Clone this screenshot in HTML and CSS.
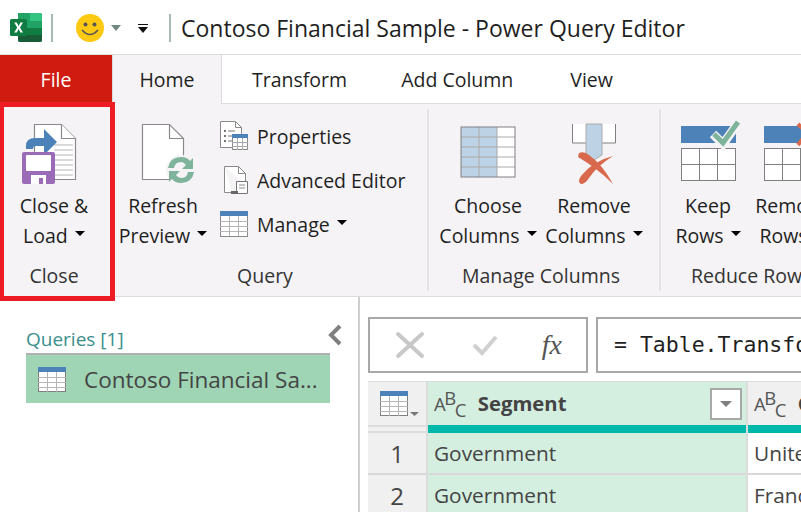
FILE: index.html
```html
<!DOCTYPE html>
<html lang="en">
<head>
    <meta charset="UTF-8">
    <title>Contoso Financial Sample - Power Query Editor</title>
    <link rel="stylesheet" href="styles.css">
</head>
<body>
<div class="app">
    <!-- Title bar -->
    <header class="titlebar">
        <svg class="icon-excel" width="32" height="29" viewBox="0 0 32 29">
            <path d="M8 0h22a2 2 0 0 1 2 2v25a2 2 0 0 1-2 2H10a2 2 0 0 1-2-2z" fill="#21a366"/>
            <path d="M20 0h10a2 2 0 0 1 2 2v6H20z" fill="#33c481"/>
            <rect x="8" y="8" width="12" height="7" fill="#21a366"/>
            <rect x="20" y="8" width="12" height="7" fill="#21a366"/>
            <rect x="8" y="15" width="12" height="7" fill="#107c41"/>
            <rect x="20" y="15" width="12" height="7" fill="#107c41"/>
            <path d="M8 22h24v5a2 2 0 0 1-2 2H10a2 2 0 0 1-2-2z" fill="#185c37"/>
            <rect x="0" y="6" width="17" height="17" rx="1.5" fill="#107c41"/>
            <path d="M4.2 9.5h2.5l1.9 3.4 1.9-3.4H13l-3 5 3 5h-2.5l-1.9-3.4-1.9 3.4H4.2l3-5z" fill="#fff"/>
        </svg>
        <span class="titlebar-sep"></span>
        <svg class="icon-smiley" width="28" height="28" viewBox="0 0 28 28">
            <circle cx="14" cy="14" r="14" fill="#fdc913"/>
            <circle cx="9.5" cy="10.5" r="2" fill="#555"/>
            <circle cx="18.5" cy="10.5" r="2" fill="#555"/>
            <path d="M6 16q8 9 16 0" fill="none" stroke="#555" stroke-width="1.6"/>
        </svg>
        <span class="qat-caret"></span>
        <span class="qat-more"></span>
        <span class="titlebar-sep second"></span>
        <span class="window-title">Contoso Financial Sample - Power Query Editor</span>
    </header>

    <!-- Tabs -->
    <nav class="tabs">
        <div class="tab file">File</div>
        <div class="tab active">Home</div>
        <div class="tab transform">Transform</div>
        <div class="tab addcol">Add Column</div>
        <div class="tab view">View</div>
    </nav>

    <!-- Ribbon -->
    <section class="ribbon">
        <div class="group close-group">
            <div class="group-body">
                <div class="big-btn w-close">
                    <svg class="nudge-left" width="60" height="62" viewBox="0 0 60 62">
                        <path d="M14.5 1.5h27l14 14v41h-41z" fill="#fff" stroke="#8a8a8a" stroke-width="1.2"/>
                        <path d="M41.500 1.500v14h14" fill="#fff" stroke="#8a8a8a" stroke-width="1.2"/>
                        <path d="M34 22h19M34 27h19M34 32h19M34 37h19M34 42h19M34 47h19M34 52h19" stroke="#b5b5b5" stroke-width="1.2"/>
                        <path d="M6 26v-3q0-8 9-8h9V6l13 13-13 13v-9h-8q-3 0-3 3z" fill="#4d82b8"/>
                        <rect x="2" y="29" width="33" height="32" rx="2" fill="#9a6cb8"/>
                        <rect x="6" y="32" width="25" height="16" rx="1" fill="#fff"/>
                        <path d="M11 61v-9h15v9h-3v-6h-4v6z" fill="#fff"/>
                    </svg>
                    <div class="big-label">Close &amp;<br>Load <span class="caret"></span></div>
                </div>
            </div>
            <div class="group-label">Close</div>
        </div>

        <div class="group query-group">
            <div class="group-body">
                <div class="big-btn w-refresh">
                    <svg width="60" height="62" viewBox="0 0 60 62">
                        <path d="M9.500 1.500h27l14 14v41h-41z" fill="#fff" stroke="#8a8a8a" stroke-width="1.2"/>
                        <path d="M36.500 1.500v14h14" fill="none" stroke="#8a8a8a" stroke-width="1.200"/>
                        <circle cx="48" cy="47" r="15" fill="#f5f3f5"/>
                        <path d="M35 45q2-11 13-11 6 0 9 4l3-3v11H49l4-4q-2-3-5-3-6 0-7 6z" fill="#7eb39c"/>
                        <path d="M61 49q-2 11-13 11-6 0-9-4l-3 3V48h11l-4 4q2 3 5 3 6 0 7-6z" fill="#7eb39c"/>
                    </svg>
                    <div class="big-label">Refresh<br>Preview <span class="caret"></span></div>
                </div>
                <div class="small-col">
                    <div class="small-btn">
                        <svg width="30" height="30" viewBox="0 0 30 30">
                            <path d="M.5.500h15l6 6v20H.5z" fill="#fff" stroke="#8a8a8a"/>
                            <path d="M15.500.500v6h6" fill="none" stroke="#8a8a8a"/>
                            <path d="M4 9h2v2H4zM4 14h2v2H4zM4 19h2v2H4z" fill="#777"/>
                            <path d="M8 10h7M8 15h5M8 20h4" stroke="#777"/>
                            <rect x="12.500" y="13.500" width="15" height="15" fill="#fff" stroke="#8a8a8a"/>
                            <rect x="12" y="13" width="16" height="4" fill="#4d82b8"/>
                            <path d="M17.500 17v12M22.500 17v12M12 21.500h16M12 25.500h16" stroke="#aaa"/>
                        </svg>
                        <span>Properties</span>
                    </div>
                    <div class="small-btn">
                        <svg width="30" height="30" viewBox="0 0 30 30">
                            <path d="M4.500 1.500h14l7 7v11M12 27.500H4.500v-26" fill="#fff" stroke="#8a8a8a"/>
                            <path d="M18.500 1.500v7h7" fill="none" stroke="#8a8a8a"/>
                            <path d="M16.500 16.500h11v12h-11z" fill="#fff" stroke="#777"/>
                            <path d="M11 26h7v3h-7z" fill="#666"/>
                            <path d="M19 20h6M19 23h6" stroke="#888"/>
                        </svg>
                        <span>Advanced Editor</span>
                    </div>
                    <div class="small-btn">
                        <svg width="30" height="30" viewBox="0 0 30 30">
                            <rect x=".5" y="3.500" width="27" height="24" fill="#fff" stroke="#8a8a8a"/>
                            <rect x="0" y="2" width="28" height="5" fill="#4d82b8"/>
                            <path d="M9.500 7v20M18.500 7v20M0 12.500h28M0 17.500h28M0 22.500h28" stroke="#b5b5b5"/>
                        </svg>
                        <span>Manage <span class="caret"></span></span>
                    </div>
                </div>
            </div>
            <div class="group-label">Query</div>
        </div>

        <div class="group columns-group">
            <div class="group-body">
                <div class="big-btn w-col">
                    <svg width="56" height="62" viewBox="0 0 56 62">
                        <rect x="1" y="4" width="54" height="50" fill="#fff"/>
                        <rect x="1" y="4" width="36" height="50" fill="#bed2e6"/>
                        <path d="M19 4v50M37 4v50M1 14h54M1 24h54M1 34h54M1 44h54" stroke="#aaa"/>
                        <rect x="1" y="4" width="54" height="50" fill="none" stroke="#808080"/>
                    </svg>
                    <div class="big-label">Choose<br>Columns <span class="caret"></span></div>
                </div>
                <div class="big-btn w-col">
                    <svg width="56" height="62" viewBox="0 0 56 62">
                        <path d="M6.500 1v19h43V1" fill="#fff" stroke="#808080"/>
                        <path d="M20 1h16v31l-8 5-8-5z" fill="#bed2e6" stroke="#aaa"/>
                        <path d="M13 30q5-2 10 2 13 9 24 29-16-16-35-27z" fill="#d9694c"/>
                        <path d="M47 33q-20 5-32 20-4 6 0 8 4 0 8-6 8-12 24-22z" fill="#d9694c"/>
                    </svg>
                    <div class="big-label">Remove<br>Columns <span class="caret"></span></div>
                </div>
            </div>
            <div class="group-label">Manage Columns</div>
        </div>

        <div class="group rows-group">
            <div class="group-body">
                <div class="big-btn w-row">
                    <svg width="60" height="62" viewBox="0 0 60 62">
                        <g transform="translate(1 0)">
                            <rect x="2" y="3" width="55" height="17" fill="#4d82b8"/>
                            <rect x="2.500" y="25.500" width="54" height="32" fill="#fff" stroke="#808080"/>
                            <path d="M20.500 25v32M38.500 25v32M2 41.500h55" stroke="#808080"/>
                        </g>
                        <path d="M35 11l10 10 15-21" fill="none" stroke="#f5f3f5" stroke-width="9"/>
                        <path d="M36 11l9 9 15-21" fill="none" stroke="#7eb39c" stroke-width="5"/>
                    </svg>
                    <div class="big-label">Keep<br>Rows <span class="caret"></span></div>
                </div>
                <div class="big-btn w-row">
                    <svg width="60" height="62" viewBox="0 0 60 62">
                        <rect x="2" y="3" width="55" height="17" fill="#4d82b8"/>
                        <rect x="2.500" y="25.500" width="54" height="32" fill="#fff" stroke="#808080"/>
                        <path d="M20.500 25v32M38.500 25v32M2 41.500h55" stroke="#808080"/>
                        <path d="M36 1l9 9 9-9M36 22l9-12 9 12" fill="none" stroke="#d9694c" stroke-width="4"/>
                    </svg>
                    <div class="big-label">Remove<br>Rows <span class="caret"></span></div>
                </div>
            </div>
            <div class="group-label">Reduce Rows</div>
        </div>
    </section>

    <!-- Red highlight around the Close group -->
    <div class="highlight"></div>

    <main class="main">
        <aside class="queries">
            <div class="queries-head">
                <span class="queries-title">Queries [1]</span>
                <svg class="collapse" width="16" height="22" viewBox="0 0 16 22">
                    <path d="M13 2L4 11l9 9" fill="none" stroke="#808080" stroke-width="4"/>
                </svg>
            </div>
            <div class="query-item">
                <svg width="28" height="26" viewBox="0 0 28 26">
                    <rect x=".5" y=".5" width="27" height="24" fill="#fff" stroke="#808080"/>
                    <rect x="0" y="0" width="28" height="5" fill="#4d82b8"/>
                    <path d="M9.500 5v20M18.500 5v20M0 10.500h28M0 15.500h28M0 20.500h28" stroke="#b5b5b5"/>
                </svg>
                <span>Contoso Financial Sa...</span>
            </div>
        </aside>

        <div class="content">
            <div class="formula-bar">
                <div class="formula-btns">
                    <svg width="30" height="28" viewBox="0 0 30 28">
                        <path d="M3 3l24 22M27 3L3 25" stroke="#c8c8c8" stroke-width="4" stroke-linecap="round"/>
                    </svg>
                    <svg class="check" width="26" height="22" viewBox="0 0 26 22">
                        <path d="M2 11l8 8L24 3" fill="none" stroke="#d0d0d0" stroke-width="4"/>
                    </svg>
                    <span class="fx">fx</span>
                </div>
                <div class="formula-input">= Table.TransformColumnTypes(#"Promoted Headers",</div>
            </div>

            <div class="grid">
                <div class="corner">
                    <svg width="40" height="26" viewBox="0 0 40 26">
                        <rect x=".5" y=".5" width="27" height="24" fill="#fff" stroke="#808080"/>
                        <rect x="0" y="0" width="28" height="5" fill="#4d82b8"/>
                        <path d="M9.500 5v20M18.500 5v20M0 10.500h28M0 15.500h28M0 20.500h28" stroke="#b5b5b5"/>
                        <path d="M30 21h9l-4.500 4z" fill="#777"/>
                    </svg>
                </div>
                <div class="head selected">
                    <span class="type-abc">A<sup>B</sup><sub>C</sub></span>
                    <strong>Segment</strong>
                    <span class="filter"><span class="filter-caret"></span></span>
                </div>
                <div class="head">
                    <span class="type-abc">A<sup>B</sup><sub>C</sub></span>
                    <strong>Country</strong>
                </div>

                <div class="corner-low"></div>
                <div class="stripe"></div>
                <div class="stripe"></div>

                <div class="rownum">1</div>
                <div class="cell selected">Government</div>
                <div class="cell">United States</div>

                <div class="rownum">2</div>
                <div class="cell selected">Government</div>
                <div class="cell">France</div>
            </div>
        </div>
    </main>
</div>
</body>
</html>
```

FILE: styles.css
```css
/* General page */
body {
    margin: 0;
    background-color: #fff;
    font-family: "Open Sans", "Noto Sans", sans-serif;
    color: #1f1f1f;
}

.app {
    position: relative;
    width: 801px;
    height: 512px;
    overflow: hidden;
}

/* Title bar */
.titlebar {
    display: flex;
    align-items: center;
    box-sizing: border-box;
    height: 55px;
    padding-left: 10px;
}

.titlebar-sep {
    width: 2px;
    height: 28px;
    margin-left: 9px;
    background-color: #a9bab6;
}

.titlebar-sep.second {
    margin-left: 21px;
}

.icon-smiley {
    margin-left: 23px;
}

.qat-caret {
    width: 0;
    height: 0;
    margin-left: 7px;
    border-left: 5px solid transparent;
    border-right: 5px solid transparent;
    border-top: 6px solid #71877f;
}

.qat-more {
    position: relative;
    width: 0;
    height: 0;
    margin-left: 17px;
    margin-top: 4px;
    border-left: 5px solid transparent;
    border-right: 5px solid transparent;
    border-top: 6px solid #111;
}

.qat-more::before {
    content: "";
    position: absolute;
    left: -5px;
    top: -9px;
    width: 10px;
    height: 1px;
    background-color: #111;
}

.window-title {
    margin-left: 10px;
    font-size: 23px;
    white-space: nowrap;
}

/* Tabs */
.tabs {
    display: flex;
    height: 48px;
    border-bottom: 1px solid #dcdcdc;
    border-top: 1px solid #dcdcdc;
    margin-top: -1px;
    font-size: 19.500px;
}

.tab {
    display: flex;
    align-items: center;
    justify-content: center;
    box-sizing: border-box;
    height: 48px;
}

.tab.file {
    width: 112px;
    background-color: #d01c10;
    color: #fff;
}

.tab.active {
    width: 110px;
    height: 49px;
    padding-bottom: 1px;
    background-color: #f5f3f5;
    border-right: 1px solid #dcdcdc;
    border-left: 1px solid #dcdcdc;
}

.tab.transform { margin-left: 30px; }
.tab.addcol { margin-left: 54px; }
.tab.view { margin-left: 57px; }

/* Ribbon */
.ribbon {
    display: flex;
    height: 192px;
    background-color: #f5f3f5;
    border-bottom: 1px solid #dcdcdc;
    overflow: hidden;
}

.group {
    display: flex;
    flex-direction: column;
    flex: none;
    box-sizing: border-box;
    height: 182px;
    margin-top: 5px;
    border-right: 2px solid #e4e4e4;
}

.close-group { width: 115px; border-right: none; }
.query-group { width: 314px; }
.columns-group { width: 232px; padding-left: 6px; }
.rows-group { width: 200px; padding-left: 5px; border-right: none; }

.group-body {
    display: flex;
    flex: 1;
}

.group-label {
    height: 30px;
    line-height: 30px;
    text-align: center;
    font-size: 19.500px;
    color: #333;
}

.close-group .group-label { width: 108px; }
.query-group .group-label { padding-right: 12px; }
.columns-group .group-label { padding-right: 12px; }
.rows-group .group-label { width: 120px; text-align: left; padding-left: 25px; white-space: nowrap; }

/* Large ribbon buttons */
.big-btn {
    display: flex;
    flex-direction: column;
    align-items: center;
    flex: none;
    padding-top: 14px;
}

.big-btn svg {
    overflow: visible;
}

.nudge-left {
    margin-right: 8px;
}

.w-close { width: 108px; }
.w-refresh { width: 96px; }
.w-col { width: 106px; }
.w-row { width: 84px; }

.big-label {
    margin-top: 6px;
    font-size: 19.500px;
    line-height: 30px;
    text-align: center;
    white-space: nowrap;
}

.caret {
    display: inline-block;
    width: 0;
    height: 0;
    margin-left: 2px;
    vertical-align: 7px;
    border-left: 5px solid transparent;
    border-right: 5px solid transparent;
    border-top: 5px solid #000;
}

/* Small ribbon buttons */
.small-col {
    display: flex;
    flex-direction: column;
    margin-left: 9px;
    padding-top: 5px;
}

.small-btn {
    display: flex;
    align-items: center;
    gap: 7px;
    height: 44px;
    font-size: 19.500px;
    white-space: nowrap;
}

/* Red box over the ribbon */
.highlight {
    position: absolute;
    left: 0;
    top: 102px;
    box-sizing: border-box;
    width: 115px;
    height: 199px;
    border: 5px solid #ed1c24;
    border-left-width: 4px;
}

/* Lower area */
.main {
    display: flex;
    height: 215px;
}

.queries {
    flex: none;
    box-sizing: border-box;
    width: 360px;
    padding: 26px 28px 0 26px;
    border-right: 2px solid #cfcfcf;
}

.queries-head {
    display: flex;
    align-items: flex-end;
    justify-content: space-between;
    height: 30px;
    border-bottom: 2px solid #b0b0b0;
}

.queries-title {
    margin-bottom: 2px;
    font-size: 19px;
    line-height: 24px;
    color: #3b8f8c;
}

.collapse {
    margin-right: -13px;
    margin-bottom: 7px;
}

.query-item {
    display: flex;
    align-items: center;
    gap: 18px;
    box-sizing: border-box;
    height: 48px;
    padding: 1px 0 0 12px;
    background-color: #9fd5b5;
    font-size: 22.500px;
    color: #444;
    white-space: nowrap;
}

.content {
    flex: 1;
    min-width: 0;
    padding: 20px 0 0 8px;
}

/* Formula bar */
.formula-bar {
    display: flex;
    gap: 8px;
    height: 56px;
}

.formula-btns {
    display: flex;
    align-items: center;
    justify-content: space-between;
    box-sizing: border-box;
    width: 220px;
    flex: none;
    padding: 0 24px 0 25px;
    border: 2px solid #a8a8a8;
}

.check {
    margin-left: 4px;
}

.fx {
    font-family: "Liberation Serif", serif;
    font-style: italic;
    font-size: 28px;
    color: #555;
}

.formula-input {
    flex: 1;
    min-width: 0;
    padding-left: 16px;
    border: 2px solid #a8a8a8;
    border-right: none;
    font-family: "DejaVu Sans Mono", monospace;
    font-size: 21.500px;
    line-height: 52px;
    white-space: nowrap;
    overflow: hidden;
}

/* Data grid */
.grid {
    display: grid;
    grid-template-columns: 58px 318px 200px;
    grid-template-rows: 43px 8px 42px 42px;
    column-gap: 2px;
    row-gap: 0;
    margin-top: 8px;
    padding-top: 1px;
    background-color: #dcdcdc;
    font-size: 20.800px;
}

.corner {
    display: flex;
    align-items: center;
    padding-left: 12px;
    background-color: #f0f0f0;
}

.corner-low {
    background-color: #f0f0f0;
    border-top: 2px solid #dcdcdc;
    border-bottom: 2px solid #dcdcdc;
}

.head {
    display: flex;
    align-items: center;
    gap: 13px;
    padding-left: 6px;
    background-color: #f0f0f0;
    color: #444;
    white-space: nowrap;
    overflow: hidden;
}

.head.selected {
    background-color: #d4efe0;
}

.type-abc {
    font-size: 18.500px;
    letter-spacing: -1.500px;
    color: #555;
}

.type-abc sup,
.type-abc sub {
    font-size: 18.500px;
    line-height: 0;
}

.type-abc sup { vertical-align: 6px; }
.type-abc sub { vertical-align: -6px; }

.head strong {
    margin-top: -2px;
    font-size: 20.300px;
}

.filter {
    display: flex;
    align-items: center;
    justify-content: center;
    box-sizing: border-box;
    width: 32px;
    height: 32px;
    margin-left: auto;
    margin-right: 4px;
    background-color: #fff;
    border: 2px solid #a8a8a8;
}

.filter-caret {
    width: 0;
    height: 0;
    border-left: 6px solid transparent;
    border-right: 6px solid transparent;
    border-top: 6px solid #808080;
}

.stripe {
    background-color: #00b8a9;
}

.rownum {
    display: flex;
    align-items: center;
    justify-content: center;
    background-color: #f0f0f0;
    border-bottom: 2px solid #d8d8d8;
    font-size: 24px;
    color: #444;
}

.cell {
    display: flex;
    align-items: center;
    padding-left: 6px;
    background-color: #fff;
    border-bottom: 2px solid #d8d8d8;
    color: #444;
    white-space: nowrap;
    overflow: hidden;
}

.cell.selected {
    background-color: #d4efe0;
}
```
